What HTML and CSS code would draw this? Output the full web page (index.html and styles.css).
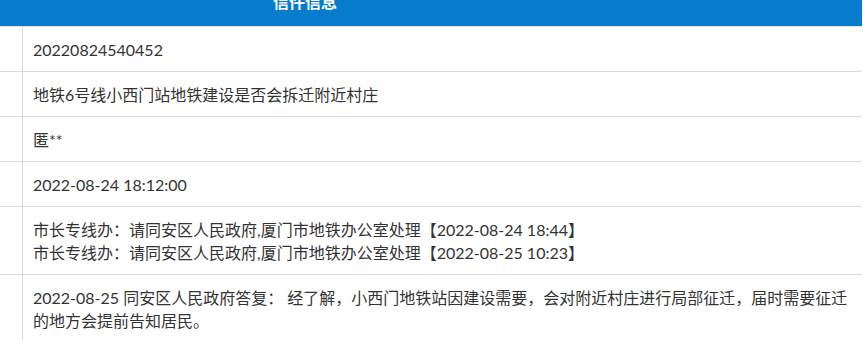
FILE: index.html
```html
<!DOCTYPE html>
<html lang="zh-CN">
<head>
<meta charset="utf-8">
<title>信件信息</title>
<link rel="stylesheet" href="styles.css">
</head>
<body>
<div class="letter">
  <div class="letter-head"><span class="letter-title">信件信息</span></div>
  <table class="letter-table">
    <tbody>
      <tr><td class="label"></td><td class="value">20220824540452</td></tr>
      <tr><td class="label"></td><td class="value">地铁6号线小西门站地铁建设是否会拆迁附近村庄</td></tr>
      <tr><td class="label"></td><td class="value">匿**</td></tr>
      <tr><td class="label"></td><td class="value">2022-08-24 18:12:00</td></tr>
      <tr><td class="label"></td><td class="value">市长专线办：请同安区人民政府,厦门市地铁办公室处理【2022-08-24 18:44】<br>市长专线办：请同安区人民政府,厦门市地铁办公室处理【2022-08-25 10:23】</td></tr>
      <tr><td class="label"></td><td class="value">2022-08-25 同安区人民政府答复： 经了解，小西门地铁站因建设需要，会对附近村庄进行局部征迁，届时需要征迁的地方会提前告知居民。</td></tr>
    </tbody>
  </table>
</div>
</body>
</html>
```

FILE: styles.css
```css
html, body {
  margin: 0;
  padding: 0;
  background: #fff;
}
body {
  font-family: "Lato", "Noto Sans CJK SC", sans-serif;
  color: #333;
  overflow: hidden;
}
.letter {
  width: 862px;
  margin-top: -20px;
}
.letter-head {
  height: 46px;
  line-height: 44px;
  background: #077ccd;
  padding-left: 273px;
  border-bottom: 1px solid #e3e3e3;
}
.letter-title {
  color: #fff;
  font-weight: bold;
  font-size: 16px;
}
.letter-table {
  width: 862px;
  border-collapse: collapse;
  table-layout: fixed;
}
.letter-table td {
  border-bottom: 1px solid #dcdcdc;
  font-size: 16px;
  line-height: 23px;
  padding: 11px 0 10px 0;
  vertical-align: top;
}
.letter-table td.label {
  width: 22px;
  border-right: 1px solid #dcdcdc;
}
.letter-table td.value {
  padding-left: 10px;
  padding-right: 6px;
}
```
